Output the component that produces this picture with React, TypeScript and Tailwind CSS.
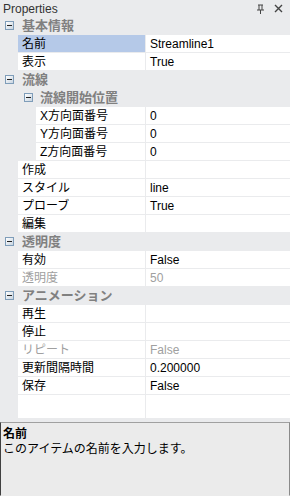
import React from "react";

type Row =
  | { kind: "cat"; label: string; depth: number }
  | { kind: "prop"; label: string; value?: string; depth: number; disabled?: boolean; selected?: boolean };

const rows: Row[] = [
  { kind: "cat", label: "基本情報", depth: 0 },
  { kind: "prop", label: "名前", value: "Streamline1", depth: 1, selected: true },
  { kind: "prop", label: "表示", value: "True", depth: 1 },
  { kind: "cat", label: "流線", depth: 0 },
  { kind: "cat", label: "流線開始位置", depth: 1 },
  { kind: "prop", label: "X方向面番号", value: "0", depth: 2 },
  { kind: "prop", label: "Y方向面番号", value: "0", depth: 2 },
  { kind: "prop", label: "Z方向面番号", value: "0", depth: 2 },
  { kind: "prop", label: "作成", depth: 1 },
  { kind: "prop", label: "スタイル", value: "line", depth: 1 },
  { kind: "prop", label: "プローブ", value: "True", depth: 1 },
  { kind: "prop", label: "編集", depth: 1 },
  { kind: "cat", label: "透明度", depth: 0 },
  { kind: "prop", label: "有効", value: "False", depth: 1 },
  { kind: "prop", label: "透明度", value: "50", depth: 1, disabled: true },
  { kind: "cat", label: "アニメーション", depth: 0 },
  { kind: "prop", label: "再生", depth: 1 },
  { kind: "prop", label: "停止", depth: 1 },
  { kind: "prop", label: "リピート", value: "False", depth: 1, disabled: true },
  { kind: "prop", label: "更新間隔時間", value: "0.200000", depth: 1 },
  { kind: "prop", label: "保存", value: "False", depth: 1 },
];

const Minus = () => (
  <span className="flex h-[9px] w-[9px] items-center justify-center border border-[#7f9db9] bg-gradient-to-br from-white to-[#c8d4e0]">
    <span className="h-[1px] w-[5px] bg-[#222]" />
  </span>
);

const App = () => {
  return (
    <div
      className="flex h-[496px] w-[290px] flex-col overflow-hidden bg-[#eaebed] text-[12px] leading-none text-black"
      style={{ fontFamily: '"Liberation Sans", "Noto Sans CJK JP", sans-serif' }}
    >
      <div className="flex h-[17px] shrink-0 items-center justify-between pl-[3px] pr-[7px] text-[#333]">
        <span>Properties</span>
        <div className="flex items-center gap-[9px] text-[#555]">
          <svg width="9" height="10" viewBox="0 0 9 10">
            <path d="M2 1h5M3 1v5M6 1v5M1 6h7M4.5 6v4" stroke="#444" strokeWidth="1" fill="none" />
          </svg>
          <svg width="9" height="9" viewBox="0 0 9 9">
            <path d="M1 1l7 7M8 1l-7 7" stroke="#444" strokeWidth="1.4" />
          </svg>
        </div>
      </div>

      <div className="flex shrink-0 flex-col">
        {rows.map((r, i) =>
          r.kind === "cat" ? (
            <div key={i} className="flex h-[18px] items-center border-b border-[#eaebed] bg-[#eaebed]">
              <div className={`flex items-center ${r.depth === 0 ? "w-[18px] pl-[5px]" : "w-[36px] pl-[24px]"}`}>
                <Minus />
              </div>
              <span className="pl-[4px] text-[13px] font-bold text-[#808080]">{r.label}</span>
            </div>
          ) : (
            <div key={i} className="flex h-[18px] bg-white">
              <div className={`shrink-0 bg-[#eaebed] ${r.depth === 2 ? "w-[36px]" : "w-[18px]"}`} />
              <div
                className={`flex flex-1 items-center border-b border-[#eaebed] pl-[4px] ${r.selected ? "bg-[#b5c9e8]" : ""} ${
                  r.disabled ? "text-[#a0a0a0]" : ""
                }`}
              >
                {r.label}
              </div>
              <div
                className={`flex w-[145px] shrink-0 items-center border-b border-l border-[#eaebed] pl-[4px] ${
                  r.disabled ? "text-[#a0a0a0]" : ""
                }`}
              >
                {r.value}
              </div>
            </div>
          )
        )}
        <div className="flex h-[23px] bg-white">
          <div className="w-[18px] shrink-0 bg-[#eaebed]" />
          <div className="flex-1" />
          <div className="w-[145px] shrink-0 border-l border-[#eaebed]" />
        </div>
      </div>

      <div className="mt-[4px] flex-1 border border-l-[#404040] border-r-[#8a8a8a] border-t-[#a0a0a0] border-b-transparent bg-[#ebebeb] px-[2px] pt-[5px]">
        <div className="font-bold">名前</div>
        <div className="mt-[3px]">このアイテムの名前を入力します。</div>
      </div>
    </div>
  );
};

export default App;
